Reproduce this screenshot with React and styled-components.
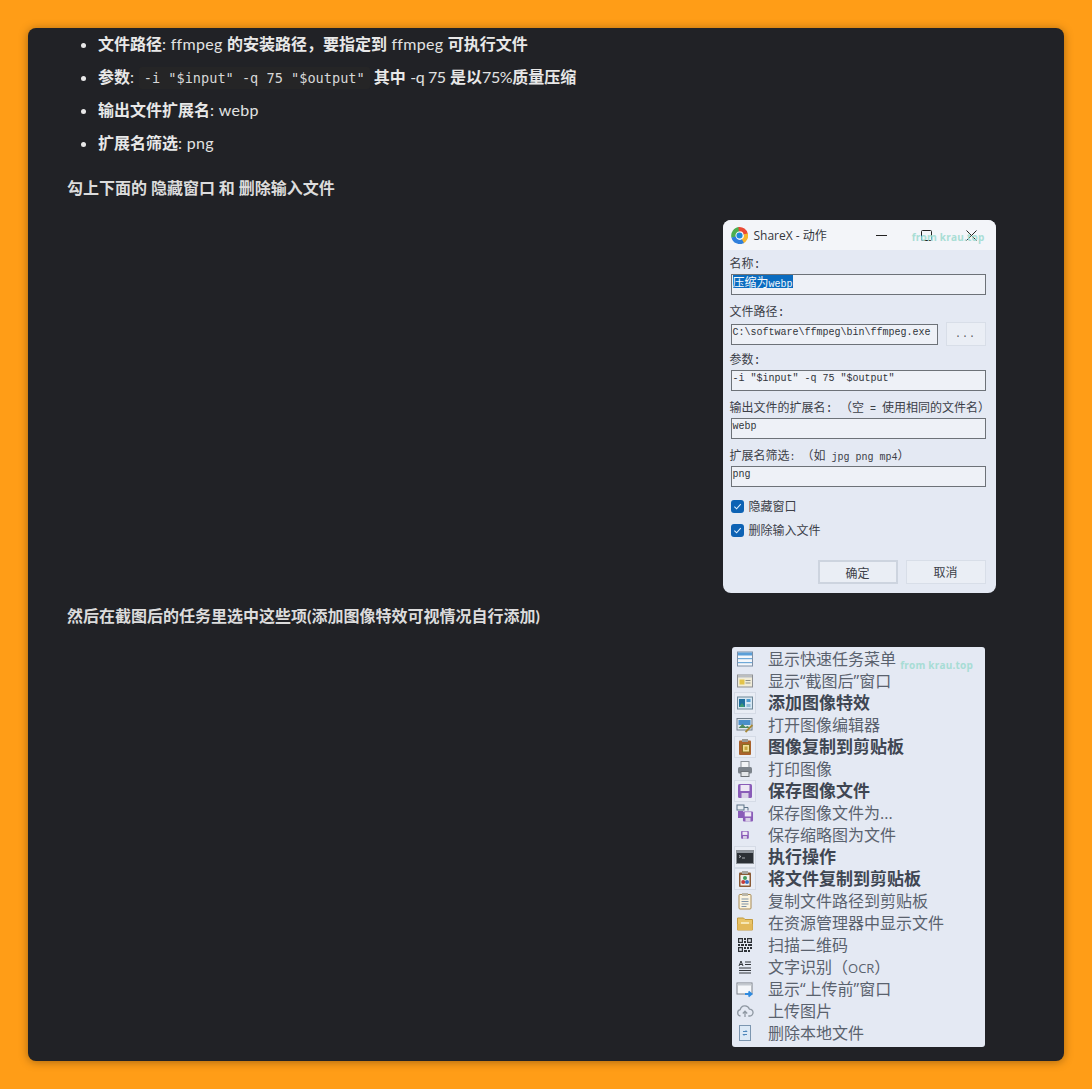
import React from "react";
import styled, { createGlobalStyle } from "styled-components";

const GlobalStyle = createGlobalStyle`
    html, body {
        margin: 0;
        padding: 0;
        background: #ff9d17;
    }
`;

const Page = styled.div`
    padding: 28px 28px 28px;
    background: #ff9d17;
`;
const Card = styled.main`
    box-sizing: border-box;
    height: 1033px;
    padding-top: 3px;
    background: #212226;
    border-radius: 8px;
    box-shadow: 0 1px 10px rgba(0, 0, 0, 0.35);
    color: #e2e2e2;
    font-family: Lato, "Noto Sans CJK SC", sans-serif;
    font-size: 16px;
    line-height: 25px;
    overflow: hidden;
`;
const List = styled.ul`
    margin: 0;
    padding: 0 0 0 70px;
    list-style: disc;
    li {
        margin-bottom: 8px;
        letter-spacing: 0.3px;
        &::marker { color: #e8e8e8; }
    }
    strong {
        font-weight: 700;
        color: #e8e8e8;
        letter-spacing: 0;
    }
`;
const Tight = styled.span`
    letter-spacing: -0.4px;
`;
const Code = styled.code`
    margin: 0 4px 0 0;
    padding: 3px 5px;
    background: #252526;
    border-radius: 3px;
    color: #d8d8d8;
    font-family: "DejaVu Sans Mono", monospace;
    font-size: 13.6px;
    line-height: 1;
    letter-spacing: 0;
`;
const Para = styled.p`
    margin: ${(p) => p.$top}px 0 0 39px;
    font-size: 16px;
    font-weight: 700;
    color: #dcdcdc;
`;
const Figure = styled.figure`
    position: relative;
    display: flex;
    justify-content: center;
    width: 410px;
    margin: ${(p) => p.$top}px 0 0 auto;
`;

const Dialog = styled.div`
    position: relative;
    width: 273px;
    height: 373px;
    background: #e4e9f3;
    border-radius: 8px;
    overflow: hidden;
    color: #3c4048;
    font-family: "Noto Sans CJK SC", sans-serif;
    font-size: 12px;
`;
const TitleBar = styled.div`
    display: flex;
    align-items: center;
    height: 30px;
    padding: 0 2px 0 8px;
    background: #f3f5f9;
`;
const TitleText = styled.span`
    margin-left: 6px;
    flex: 1;
    font-family: "Open Sans", "Noto Sans CJK SC", sans-serif;
    font-size: 12px;
    color: #33373d;
`;
const WinButton = styled.span`
    display: flex;
    align-items: center;
    justify-content: center;
    width: 45px;
    height: 30px;
`;
const Watermark = styled.span`
    position: absolute;
    top: ${(p) => p.$top}px;
    right: ${(p) => p.$right}px;
    font-family: "Open Sans", sans-serif;
    font-size: 10px;
    font-weight: 700;
    line-height: 12px;
    letter-spacing: 0.2px;
    color: #a1dcd2;
    opacity: 0.9;
`;
const DialogBody = styled.div`
    padding: 6px 10px 9px 8px;
`;
const Field = styled.div`
    height: 48px;
`;
const FieldLabel = styled.label`
    display: block;
    height: 18px;
    margin-left: -1px;
    font-family: "Liberation Mono", "Noto Sans CJK SC", monospace;
    line-height: 18px;
    white-space: nowrap;
`;
const SmallMono = styled.span`
    font-size: 10px;
`;
const InputRow = styled.div`
    display: flex;
    align-items: center;
    gap: 8px;
`;
const TextBox = styled.div`
    box-sizing: border-box;
    flex: 1;
    height: 21px;
    padding-left: 1px;
    border: 1px solid #6d7278;
    background: #eef1f7;
    color: #30343a;
    font-family: "Liberation Mono", monospace;
    font-size: 10px;
    line-height: 16px;
    white-space: nowrap;
`;
const Selected = styled.span`
    display: inline-block;
    height: 13px;
    line-height: 13px;
    background: #0a6cc0;
    color: #f4f8fc;
    span {
        font-family: "Noto Sans CJK SC", sans-serif;
        font-size: 12px;
    }
`;
const Browse = styled.div`
    box-sizing: border-box;
    width: 40px;
    height: 24px;
    border: 1px solid #d8dee8;
    background: #eaeef5;
    text-align: center;
    font-family: "Liberation Mono", monospace;
    font-size: 10px;
    line-height: 24px;
    letter-spacing: 1px;
    color: #555;
`;
const CheckList = styled.div`
    margin-top: -2px;
`;
const CheckRow = styled.div`
    display: flex;
    align-items: center;
    gap: 5px;
    height: 24px;
    line-height: 24px;
`;
const CheckBox = styled.span`
    display: flex;
    align-items: center;
    justify-content: center;
    width: 13px;
    height: 13px;
    background: #0d62b4;
    border-radius: 3px;
`;
const Actions = styled.div`
    display: flex;
    justify-content: flex-end;
    gap: 8px;
    margin-top: 18px;
`;
const ActionButton = styled.div`
    box-sizing: border-box;
    width: 80px;
    height: 24px;
    border: ${(p) => (p.$primary ? "2px solid #cdd4df" : "1px solid #d8dee8")};
    background: #eaeef5;
    text-align: center;
    line-height: ${(p) => (p.$primary ? 21 : 22)}px;
    color: #3c4048;
`;

const Menu = styled.ul`
    position: relative;
    box-sizing: border-box;
    width: 253px;
    height: 400px;
    margin: 0 1px 0 0;
    padding: 1px 0;
    list-style: none;
    background: #e4e9f3;
    border-radius: 3px;
    font-family: "Open Sans", "Noto Sans CJK SC", sans-serif;
    font-size: 16px;
`;
const MenuRow = styled.li`
    display: flex;
    align-items: center;
    gap: 12px;
    height: 22px;
    padding-left: 2px;
    line-height: 22px;
    white-space: nowrap;
    font-size: ${(p) => (p.$on ? 17 : 16)}px;
    font-weight: ${(p) => (p.$on ? 700 : 400)};
    color: ${(p) => (p.$on ? "#3f4652" : "#5a626e")};
`;
const IconBox = styled.span`
    box-sizing: border-box;
    display: flex;
    align-items: center;
    justify-content: center;
    width: 22px;
    height: 22px;
    border: 1px solid ${(p) => (p.$on ? "#d5dbe6" : "transparent")};
    background: ${(p) => (p.$on ? "#e9edf5" : "transparent")};
`;
const Ocr = styled.span`
    font-size: 13px;
    line-height: 1;
`;

const ShareXLogo = () => (
    <svg width="17" height="17" viewBox="0 0 20 20" fill="none" strokeWidth="5">
        <path d="M3 12a7.5 7.5 0 0 1 7-9.4" stroke="#4caf50" />
        <path d="M9 2.6a7.5 7.5 0 0 1 8.4 6" stroke="#ea4a35" />
        <path d="M17.4 8a7.5 7.5 0 0 1-4 9" stroke="#f7b52c" />
        <path d="M14 16.7a7.5 7.5 0 0 1-11-5" stroke="#2f7fdc" />
        <circle cx="10" cy="10" r="3.6" fill="#1e88d8" stroke="none" />
    </svg>
);
const Tick = () => (
    <svg width="9" height="9" viewBox="0 0 10 10" fill="none" stroke="#dff0ff" strokeWidth="1.2">
        <path d="M1.5 5.2 4 7.6 8.6 2.4" />
    </svg>
);

const Svg = ({ children }) => (
    <svg width="18" height="18" viewBox="0 0 18 18" fill="none">{children}</svg>
);
const floppy = (
    <>
        <rect x="2" y="2" width="14" height="14" rx="1.5" fill="#8a5cb8" />
        <rect x="4.5" y="3" width="9" height="6" fill="#eee8f5" />
        <rect x="5.5" y="11" width="7" height="5" fill="#d9d0e6" />
    </>
);
const icons = {
    quick: (
        <Svg>
            <rect x="1.5" y="2" width="15" height="14" fill="#f4f7fb" stroke="#7d8fa5" />
            <rect x="2" y="2.5" width="14" height="3" fill="#5a9fd8" />
            <rect x="2" y="8" width="14" height="1.2" fill="#6fa9d8" />
            <rect x="2" y="12" width="14" height="1.2" fill="#6fa9d8" />
        </Svg>
    ),
    after: (
        <Svg>
            <rect x="1.5" y="3" width="15" height="12" fill="#f0ecd8" stroke="#8d8f92" />
            <rect x="2" y="3.5" width="14" height="2" fill="#b9bdc3" />
            <rect x="3.5" y="7.5" width="5" height="5" fill="#e2c34a" />
            <rect x="9.5" y="8" width="5" height="1" fill="#8c8f86" />
            <rect x="9.5" y="10.5" width="5" height="1" fill="#8c8f86" />
        </Svg>
    ),
    effects: (
        <Svg>
            <rect x="1.5" y="3" width="15" height="12" fill="#d6e7f3" stroke="#6f8798" />
            <rect x="3" y="5" width="6" height="8" fill="#1f6f9e" />
            <path d="M3 13l3-4 3 4z" fill="#3c9a74" />
            <rect x="10.5" y="5" width="4" height="3" fill="#4f9ccf" />
            <rect x="10.5" y="10" width="4" height="3" fill="#8fbcd8" />
        </Svg>
    ),
    editor: (
        <Svg>
            <rect x="1" y="2.5" width="15" height="11.5" fill="#dfe7ef" stroke="#74808c" />
            <rect x="2.5" y="4" width="12" height="5" fill="#4b8fc9" />
            <path d="M2.5 12l4-4 3 3 2-1 3 2z" fill="#4f8a5c" />
            <path d="M9.5 16 16.5 9" stroke="#a88a3a" strokeWidth="1.8" />
        </Svg>
    ),
    clipImage: (
        <Svg>
            <rect x="3" y="2.5" width="12" height="14.5" rx="1" fill="#a9622c" />
            <rect x="6" y="1" width="6" height="3" fill="#9a9a96" />
            <rect x="6.5" y="6.5" width="7" height="7.5" fill="#f0dd9a" stroke="#8a6f1f" />
            <rect x="8.5" y="8.5" width="3" height="3.5" fill="#c7a63c" />
        </Svg>
    ),
    print: (
        <Svg>
            <rect x="5" y="1.5" width="8" height="6" fill="#f2f4f6" stroke="#8a9097" />
            <rect x="2" y="7" width="14" height="6.5" rx="1.5" fill="#7c838b" />
            <rect x="5" y="11.5" width="8" height="5" fill="#e4e7ea" stroke="#6d7278" />
        </Svg>
    ),
    save: <Svg>{floppy}</Svg>,
    saveAs: (
        <Svg>
            <rect x="1" y="1" width="7" height="5" fill="#e8edf2" stroke="#5d7388" />
            <path d="M8 3.5h4v3" stroke="#5d7388" />
            <g transform="translate(5.5 6) scale(0.72)">{floppy}</g>
            <rect x="2" y="7" width="5" height="7" fill="#8a5cb8" />
        </Svg>
    ),
    thumb: (
        <Svg>
            <g transform="translate(4 4) scale(0.55)">{floppy}</g>
        </Svg>
    ),
    action: (
        <Svg>
            <rect x="0.5" y="2.5" width="17" height="13" fill="#2c3035" stroke="#8b9096" />
            <rect x="1" y="3" width="16" height="2" fill="#8e949b" />
            <path d="M3 7.5l2 1-2 1M6 10h3" stroke="#c9cdd2" strokeWidth="0.8" />
        </Svg>
    ),
    clipFile: (
        <Svg>
            <rect x="3" y="2.5" width="12" height="14.5" rx="1" fill="#8a5a35" />
            <rect x="6" y="1" width="6" height="3" fill="#a5a5a0" />
            <rect x="4.5" y="5" width="9" height="10.5" fill="#f2f2ee" />
            <circle cx="9" cy="8" r="2" fill="#3f9c5c" />
            <circle cx="7.2" cy="12" r="2" fill="#c43b3b" />
            <circle cx="11" cy="12" r="2" fill="#3b6fc4" />
        </Svg>
    ),
    clipPath: (
        <Svg>
            <rect x="3" y="2.5" width="12" height="14.5" rx="1" fill="#fbf4df" stroke="#a88a52" />
            <rect x="6" y="1" width="6" height="3" fill="#b9b6aa" />
            <path d="M5.5 7h7M5.5 9.5h7M5.5 12h7M5.5 14.5h5" stroke="#7f93a8" />
        </Svg>
    ),
    folder: (
        <Svg>
            <path d="M1.5 4h6l1.5 1.5h7.5V16h-15z" fill="#e9c468" stroke="#c29a3e" />
            <rect x="5" y="8" width="8" height="4" fill="#f6e6b4" />
            <path d="M1.5 10h15V16h-15z" fill="#e3b95a" />
        </Svg>
    ),
    qr: (
        <Svg>
            <path
                d="M2 2h5v5H2zM3.2 3.2v2.6h2.6V3.2zM11 2h5v5h-5zM12.2 3.2v2.6h2.6V3.2zM2 11h5v5H2zM3.2 12.2v2.6h2.6v-2.6zM8 2h2v2H8zM8 5h2v2H8zM2 8h2v2H2zM5 8h3v2H5zM9 8h2v2H9zM12 8h4v2h-4zM8 11h2v2H8zM11 11h2v2h-2zM14 11h2v2h-2zM8 14h3v2H8zM12 14h2v2h-2z"
                fill="#2e3237"
                fillRule="evenodd"
            />
        </Svg>
    ),
    ocr: (
        <Svg>
            <path d="M3 8l2-5 2 5M3.8 6.5h2.4" stroke="#33373c" />
            <path d="M9 4h6M9 6.5h6M3 10h12M3 12.5h12M3 15h12" stroke="#33373c" />
        </Svg>
    ),
    before: (
        <Svg>
            <rect x="1" y="3" width="15" height="11" fill="#f5f7fa" stroke="#7b8088" />
            <rect x="1.5" y="3.5" width="14" height="2" fill="#c4c9d0" />
            <path d="M9 14h5.5M12.5 11.5l3 2.5-3 2.5" stroke="#2f8be0" strokeWidth="1.8" />
        </Svg>
    ),
    upload: (
        <Svg>
            <path
                d="M4.5 14a3.2 3.2 0 0 1-.3-6.3 4.8 4.8 0 0 1 9.2-.6 3.4 3.4 0 0 1 .4 6.9h-1.5M9 15V9.5M6.8 11.5 9 9.2l2.2 2.3"
                stroke="#8f98a2"
                strokeWidth="1.3"
            />
        </Svg>
    ),
    remove: (
        <Svg>
            <rect x="3.5" y="1.5" width="11" height="15" fill="#dce9f6" stroke="#7c96b0" />
            <path d="M7 7.5h4l-1.2-1.2M11 10.5H7l1.2 1.2" stroke="#4d86bb" />
        </Svg>
    ),
};

const menuItems = [
    { icon: "quick", text: "显示快速任务菜单" },
    { icon: "after", text: "显示“截图后”窗口" },
    { icon: "effects", text: "添加图像特效", on: true },
    { icon: "editor", text: "打开图像编辑器" },
    { icon: "clipImage", text: "图像复制到剪贴板", on: true },
    { icon: "print", text: "打印图像" },
    { icon: "save", text: "保存图像文件", on: true },
    { icon: "saveAs", text: "保存图像文件为..." },
    { icon: "thumb", text: "保存缩略图为文件" },
    { icon: "action", text: "执行操作", on: true },
    { icon: "clipFile", text: "将文件复制到剪贴板", on: true },
    { icon: "clipPath", text: "复制文件路径到剪贴板" },
    { icon: "folder", text: "在资源管理器中显示文件" },
    { icon: "qr", text: "扫描二维码" },
    { icon: "ocr", text: <>文字识别（<Ocr>OCR</Ocr>）</> },
    { icon: "before", text: "显示“上传前”窗口" },
    { icon: "upload", text: "上传图片" },
    { icon: "remove", text: "删除本地文件" },
];

function App() {
    return (
        <Page>
            <GlobalStyle />
            <Card>
                <List>
                    <li><strong>文件路径</strong>: ffmpeg <strong>的安装路径，要指定到</strong> ffmpeg <strong>可执行文件</strong></li>
                    <li><strong>参数</strong>: <Code>-i "$input" -q 75 "$output"</Code><strong>其中</strong> <Tight>-q 75</Tight> <strong>是以</strong><Tight>75%</Tight><strong>质量压缩</strong></li>
                    <li><strong>输出文件扩展名</strong>: webp</li>
                    <li><strong>扩展名筛选</strong>: png</li>
                </List>
                <Para $top={20}>勾上下面的 隐藏窗口 和 删除输入文件</Para>
                <Figure $top={20}>
                    <Dialog>
                        <TitleBar>
                            <ShareXLogo />
                            <TitleText>ShareX - 动作</TitleText>
                            <WinButton>
                                <svg width="11" height="11" viewBox="0 0 11 11" stroke="#222"><path d="M0 5.5h11" /></svg>
                            </WinButton>
                            <WinButton>
                                <svg width="11" height="11" viewBox="0 0 11 11" fill="none" stroke="#222"><rect x="0.5" y="0.5" width="10" height="10" rx="1" /></svg>
                            </WinButton>
                            <WinButton>
                                <svg width="11" height="11" viewBox="0 0 11 11" stroke="#222"><path d="M0.5 0.5l10 10M10.5 0.5l-10 10" /></svg>
                            </WinButton>
                        </TitleBar>
                        <Watermark $top={11} $right={11}>from krau.top</Watermark>
                        <DialogBody>
                            <Field>
                                <FieldLabel>名称:</FieldLabel>
                                <TextBox><Selected><span>压缩为</span>webp</Selected></TextBox>
                            </Field>
                            <Field>
                                <FieldLabel>文件路径:</FieldLabel>
                                <InputRow>
                                    <TextBox>C:\software\ffmpeg\bin\ffmpeg.exe</TextBox>
                                    <Browse>...</Browse>
                                </InputRow>
                            </Field>
                            <Field>
                                <FieldLabel>参数:</FieldLabel>
                                <TextBox>-i "$input" -q 75 "$output"</TextBox>
                            </Field>
                            <Field>
                                <FieldLabel>输出文件的扩展名: （空<SmallMono> = </SmallMono>使用相同的文件名）</FieldLabel>
                                <TextBox>webp</TextBox>
                            </Field>
                            <Field>
                                <FieldLabel>扩展名筛选<SmallMono>: </SmallMono>（如<SmallMono> jpg png mp4</SmallMono>）</FieldLabel>
                                <TextBox>png</TextBox>
                            </Field>
                            <CheckList>
                                <CheckRow><CheckBox><Tick /></CheckBox>隐藏窗口</CheckRow>
                                <CheckRow><CheckBox><Tick /></CheckBox>删除输入文件</CheckRow>
                            </CheckList>
                            <Actions>
                                <ActionButton $primary>确定</ActionButton>
                                <ActionButton>取消</ActionButton>
                            </Actions>
                        </DialogBody>
                    </Dialog>
                </Figure>
                <Para $top={10}>然后在截图后的任务里选中这些项(添加图像特效可视情况自行添加)</Para>
                <Figure $top={19}>
                    <Menu>
                        {menuItems.map((item) => (
                            <MenuRow key={item.icon} $on={item.on}>
                                <IconBox $on={item.on}>{icons[item.icon]}</IconBox>
                                <span>{item.text}</span>
                            </MenuRow>
                        ))}
                        <Watermark $top={12} $right={12}>from krau.top</Watermark>
                    </Menu>
                </Figure>
            </Card>
        </Page>
    );
}

export default App;
